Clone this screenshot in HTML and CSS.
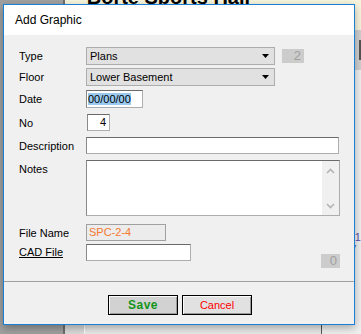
FILE: index.html
```html
<!DOCTYPE html>
<html lang="en">
<head>
  <meta charset="UTF-8">
  <meta name="viewport" content="width=device-width, initial-scale=1.0">
  <title>Add Graphic</title>
  <link rel="stylesheet" href="styles.css">
</head>
<body>
  <!-- Finestra dell'applicazione dietro al dialogo -->
  <div class="screen">
    <div class="side"></div>
    <div class="main">
      <div class="banner"><span class="venue">Borte Sports Hall</span></div>
      <div class="toolbar"><div class="tool-bit"></div></div>
      <div class="content">
        <div class="col-a"></div>
        <div class="col-b"></div>
        <div class="col-c"><span class="ref">#1<br>V</span></div>
      </div>
    </div>
  </div>

  <!-- Dialogo "Add Graphic" -->
  <div class="dialog">
    <div class="titlebar">Add Graphic</div>
    <div class="form">
      <div class="row row-type">
        <label class="lbl">Type</label>
        <div class="select">Plans
          <svg class="arrow" width="7" height="4" viewBox="0 0 7 4"><polygon points="0,0 7,0 3.5,4" fill="#000"/></svg>
        </div>
        <span class="count">2</span>
      </div>
      <div class="row row-floor">
        <label class="lbl">Floor</label>
        <div class="select">Lower Basement
          <svg class="arrow" width="7" height="4" viewBox="0 0 7 4"><polygon points="0,0 7,0 3.5,4" fill="#000"/></svg>
        </div>
      </div>
      <div class="row row-date">
        <label class="lbl">Date</label>
        <div class="input date"><span class="sel">00/00/00</span></div>
      </div>
      <div class="row row-no">
        <label class="lbl">No</label>
        <div class="input no">4</div>
      </div>
      <div class="row row-desc">
        <label class="lbl">Description</label>
        <div class="input desc"></div>
      </div>
      <div class="row row-notes">
        <label class="lbl lbl-top">Notes</label>
        <div class="input notes">
          <div class="scroll">
            <svg width="9" height="6" viewBox="0 0 9 6"><polyline points="1,5 4.5,1.5 8,5" fill="none" stroke="#b4b4b4" stroke-width="1.6"/></svg>
            <svg width="9" height="6" viewBox="0 0 9 6"><polyline points="1,1 4.5,4.5 8,1" fill="none" stroke="#b4b4b4" stroke-width="1.6"/></svg>
          </div>
        </div>
      </div>
      <div class="row row-file">
        <label class="lbl">File Name</label>
        <div class="filename">SPC-2-4</div>
      </div>
      <div class="row row-cad">
        <label class="lbl lbl-u">CAD File</label>
        <div class="input cad"></div>
        <span class="count zero">0</span>
      </div>
    </div>
    <div class="sep"></div>
    <div class="buttons">
      <button class="btn btn-save">Save</button>
      <button class="btn btn-cancel">Cancel</button>
    </div>
  </div>
</body>
</html>
```

FILE: styles.css
```css
body {
  margin: 0;
  font-family: "Liberation Sans", Arial, sans-serif;
  font-size: 11px;
  color: #000;
  overflow: hidden;
}
/* Sfondo: l'applicazione principale */
.screen {
  display: flex;
  height: 334px;
}
.side {
  width: 69px;
  background-color: #a0a0a0;
  border-right: 2px solid #6e6e6e;
}
.main {
  flex: 1;
  display: flex;
  flex-direction: column;
  background-color: #ececec;
}
.banner {
  height: 30px;
  background-color: #f6f4dc;
  padding-left: 22px;
  overflow: hidden;
}
.venue {
  display: block;
  margin-top: -13px;
  font-size: 20px;
  line-height: 20px;
  font-weight: bold;
}
.toolbar {
  height: 40px;
  background-color: #cfcfcf;
  display: flex;
  justify-content: flex-end;
  align-items: center;
}
.tool-bit {
  width: 2px;
  height: 20px;
  background-color: #555;
}
.content {
  flex: 1;
  display: flex;
}
.col-a {
  width: 19px;
  background-color: #dadada;
  border-right: 1px solid #fff;
}
.col-b {
  width: 236px;
  background-color: #e9e9e9;
  border-right: 1px solid #555;
}
.col-c {
  flex: 1;
  background-color: #f0f0f0;
  padding: 161px 0 0 27px;
}
.ref {
  color: #5a4fa8;
  font-size: 11px;
  line-height: 8px;
}
/* Il dialogo */
.dialog {
  position: absolute;
  left: 3px;
  top: 4px;
  width: 352px;
  height: 321px;
  box-sizing: border-box;
  border: 1px solid #1c7fd6;
  background-color: #f0f0f0;
  box-shadow: 0 3px 8px rgba(0, 0, 0, 0.3);
}
.titlebar {
  height: 30px;
  background-color: #fff;
  font-size: 12px;
  line-height: 30px;
  padding-left: 11px;
}
.form {
  padding: 12px 14px 0 15px;
}
.row {
  display: flex;
  align-items: center;
}
.lbl {
  width: 67px;
  flex-shrink: 0;
}
.lbl-top {
  align-self: flex-start;
  padding-top: 3px;
}
.lbl-u {
  text-decoration: underline;
}
.row-type { height: 18px; }
.row-floor { height: 18px; margin-top: 3px; }
.row-date { height: 18px; margin-top: 4px; }
.row-no { height: 17px; margin-top: 6px; }
.row-no .lbl { width: 68px; }
.row-desc { height: 17px; margin-top: 6px; }
.row-notes { height: 56px; margin-top: 6px; }
.row-file { height: 17px; margin-top: 8px; }
.row-cad { height: 24px; margin-top: 3px; align-items: flex-start; }
.row-cad .lbl { line-height: 17px; }

.select {
  position: relative;
  box-sizing: border-box;
  width: 189px;
  height: 18px;
  border: 1px solid #adadad;
  background-color: #e1e1e1;
  padding-left: 3px;
  line-height: 16px;
}
.arrow {
  position: absolute;
  right: 5px;
  top: 6px;
}
.count {
  box-sizing: border-box;
  width: 22px;
  height: 14px;
  margin-left: 7px;
  background-color: #cccccc;
  color: #a0a0a0;
  font-size: 13px;
  line-height: 14px;
  text-align: right;
  padding-right: 3px;
}
.zero {
  width: 19px;
  margin: 10px 0 0 auto;
}
.input {
  box-sizing: border-box;
  height: 100%;
  background-color: #fff;
  border: 1px solid #adadad;
  border-top-color: #6a6a6a;
  border-left-color: #8a8a8a;
}
.date {
  width: 57px;
  padding: 2px 1px;
}
.sel {
  display: inline-block;
  background-color: #99c9ef;
  line-height: 12px;
}
.no {
  width: 23px;
  text-align: right;
  padding-right: 3px;
  line-height: 15px;
}
.desc { width: 253px; }
.notes {
  width: 254px;
  display: flex;
  justify-content: flex-end;
}
.scroll {
  width: 17px;
  background-color: #f0f0f0;
  display: flex;
  flex-direction: column;
  justify-content: space-between;
  align-items: center;
  padding: 7px 0 6px;
}
.scroll svg { display: block; }
.filename {
  box-sizing: border-box;
  width: 80px;
  height: 17px;
  border: 1px solid #a0a0a0;
  background-color: #ececec;
  color: #f5782c;
  padding-left: 2px;
  line-height: 15px;
}
.cad {
  width: 105px;
  height: 17px;
}
.sep {
  margin-top: 13px;
  height: 1px;
  background-color: #a0a0a0;
}
.buttons {
  display: flex;
  gap: 4px;
  padding: 13px 0 0 104px;
}
.btn {
  box-sizing: border-box;
  width: 70px;
  height: 20px;
  border: 1px solid #000;
  box-shadow: inset 1px 1px #fafafa, inset -1px -1px #9a9a9a;
  background-color: #e1e1e1;
  font-family: "Liberation Sans", Arial, sans-serif;
  padding: 0;
}
.btn-save {
  background-color: #d2d2d2;
  color: #13951a;
  font-weight: bold;
  font-size: 12px;
  letter-spacing: 0.5px;
}
.btn-cancel {
  color: #f00;
  font-size: 11px;
}
```
